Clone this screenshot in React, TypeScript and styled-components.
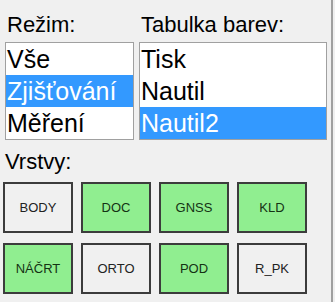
import React, {useState} from 'react';
import styled, {createGlobalStyle} from 'styled-components';

const GlobalStyle = createGlobalStyle`
  html, body {
    margin: 0;
    padding: 0;
    background: #f0f0f0;
  }
`;

const Panel = styled.div`
  width: 333px;
  height: 302px;
  box-sizing: border-box;
  border-right: 2px solid #a0a0a0;
  font-family: "Liberation Sans", Arial, sans-serif;
  color: #000;
  padding-top: 12px;
`;

const Top = styled.div`
  display: grid;
  grid-template-columns: 129px 188px;
  column-gap: 5px;
  padding-left: 5px;
`;

const Column = styled.div`
  display: flex;
  flex-direction: column;
`;

const Label = styled.div`
  font-size: 22px;
  line-height: 25px;
  padding-left: 2px;
  white-space: nowrap;
  margin-bottom: 5px;
`;

const ListBox = styled.div`
  background: #fff;
  border: 1px solid #a0a0a0;
  height: 98px;
  box-sizing: border-box;
  overflow: hidden;
`;

const Item = styled.div<{ selected: boolean }>`
  height: 32px;
  line-height: 32px;
  font-size: 25px;
  padding-left: 1px;
  white-space: nowrap;
  background: ${props => props.selected ? '#3399ff' : 'transparent'};
  color: ${props => props.selected ? '#fff' : '#000'};
  cursor: default;
`;

const LayersLabel = styled(Label)`
  margin: 9px 0 8px 3px;
`;

const Grid = styled.div`
  display: grid;
  grid-template-columns: repeat(4, 70px);
  grid-auto-rows: 51px;
  column-gap: 8px;
  row-gap: 10px;
  padding-left: 3px;
`;

const LayerButton = styled.button<{ active: boolean }>`
  box-sizing: border-box;
  margin: 0;
  padding: 0;
  border: 2px solid #3c3c3c;
  background: ${props => props.active ? '#90ee90' : '#f0f0f0'};
  color: ${props => props.active ? '#143214' : '#222'};
  font-family: "Liberation Sans", Arial, sans-serif;
  font-size: 13px;
  cursor: pointer;
`;

const modes = ['Vše', 'Zjišťování', 'Měření'];
const palettes = ['Tisk', 'Nautil', 'Nautil2'];
const layers = [
  {name: 'BODY', on: false},
  {name: 'DOC', on: true},
  {name: 'GNSS', on: true},
  {name: 'KLD', on: true},
  {name: 'NÁČRT', on: true},
  {name: 'ORTO', on: false},
  {name: 'POD', on: true},
  {name: 'R_PK', on: false},
];

export default function App() {
  const [mode, setMode] = useState(1);
  const [palette, setPalette] = useState(2);
  const [active, setActive] = useState(layers.map(l => l.on));

  const toggle = (i: number) => {
    setActive(prev => prev.map((v, j) => j === i ? !v : v));
  };

  return (
    <>
      <GlobalStyle/>
      <Panel>
        <Top>
          <Column>
            <Label>Režim:</Label>
            <ListBox>
              {modes.map((m, i) => (
                <Item key={m} selected={i === mode} onClick={() => setMode(i)}>{m}</Item>
              ))}
            </ListBox>
          </Column>
          <Column>
            <Label>Tabulka barev:</Label>
            <ListBox>
              {palettes.map((p, i) => (
                <Item key={p} selected={i === palette} onClick={() => setPalette(i)}>{p}</Item>
              ))}
            </ListBox>
          </Column>
        </Top>
        <LayersLabel>Vrstvy:</LayersLabel>
        <Grid>
          {layers.map((l, i) => (
            <LayerButton key={l.name} active={active[i]} onClick={() => toggle(i)}>{l.name}</LayerButton>
          ))}
        </Grid>
      </Panel>
    </>
  );
}
